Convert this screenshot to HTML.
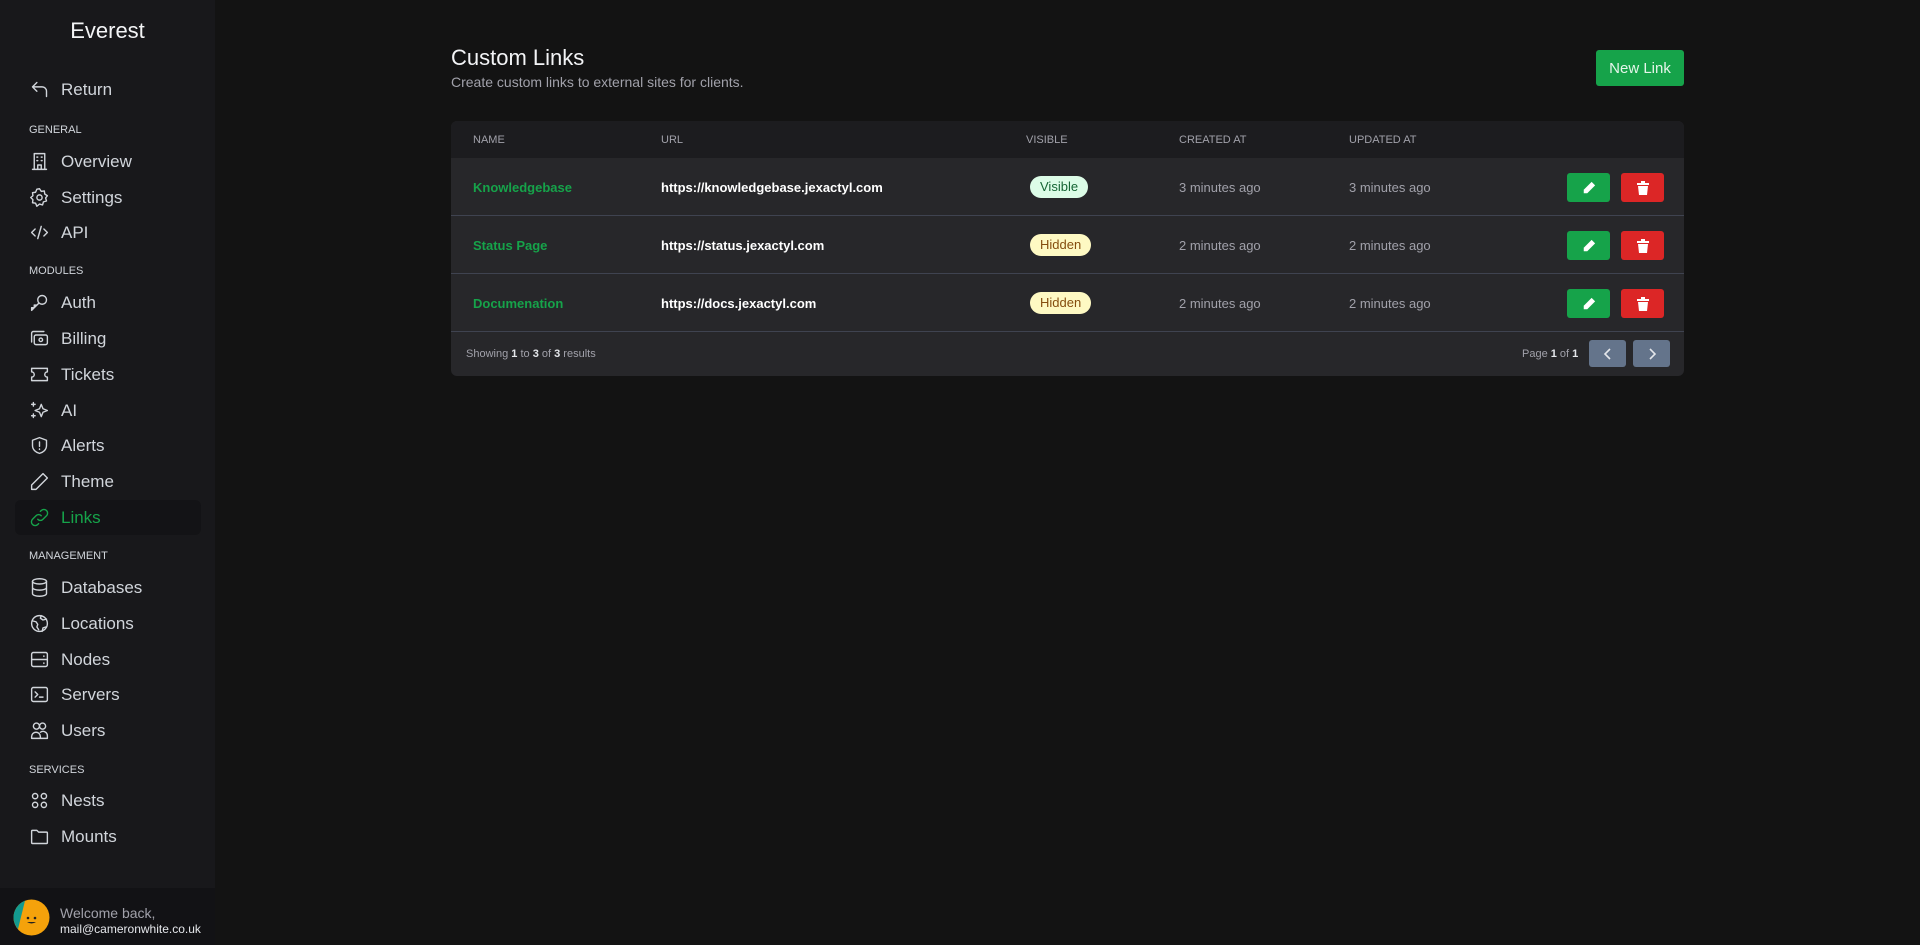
<!DOCTYPE html>
<html><head><meta charset="utf-8"><style>
*{box-sizing:border-box;margin:0;padding:0}
body{width:1920px;height:945px;background:#131313;font-family:"Liberation Sans",sans-serif;color:#e5e7eb;position:relative;overflow:hidden}
#sb{position:absolute;left:0;top:0;width:215px;height:945px;background:#18181b}
.title{position:absolute;top:18px;left:0;width:215px;text-align:center;font-size:22px;color:#f3f4f6}
.sec{position:absolute;left:29px;font-size:11px;color:#d1d5db}
.it{position:absolute;left:15px;width:186px;height:35px;display:flex;align-items:center;font-size:17px;color:#d1d5db;border-radius:6px}
.it svg{position:absolute;left:14px;width:21px;height:21px;fill:none;stroke:#d1d5db;stroke-width:1.6;stroke-linecap:round;stroke-linejoin:round}
.it span{position:absolute;left:46px}
.act{background:#131316;color:#16a34a}
.act svg{stroke:#16a34a}
#ft{position:absolute;left:0;top:888px;width:215px;height:57px;background:#121215}
#main .h1{position:absolute;left:451px;top:45px;font-size:22px;color:#f3f4f6}
#main .sub{position:absolute;left:451px;top:74px;font-size:14px;color:#a1a1aa}
.btn{position:absolute;left:1596px;top:50px;width:88px;height:36px;background:#16a34a;border-radius:3px;color:#e5f5ea;font-size:15px;display:flex;align-items:center;justify-content:center}
#tbl{position:absolute;left:451px;top:121px;width:1233px;height:255px;background:#27272a;border-radius:6px;overflow:hidden}
.th{position:absolute;top:0;left:0;width:100%;height:37px;background:#1c1c1f}
.th div{position:absolute;top:13px;font-size:11px;color:#a1a1aa}
.row{position:absolute;left:0;width:100%;height:58px;border-bottom:1px solid #3f4350}
.row div{position:absolute;top:22px;font-size:13px}
.nm{left:22px;color:#16a34a;font-weight:bold}
.url{left:210px;color:#fff;font-weight:bold}
.tm{color:#a1a1aa}
.badge{top:18px!important;left:579px;height:22px;padding:0 10px;border-radius:11px;font-size:13px!important;line-height:22px}
.ed,.dl{top:15px!important;width:43px;height:29px;border-radius:3px;display:flex;align-items:center;justify-content:center}
.ed{left:1116px;background:#16a34a}.dl{left:1170px;background:#dc2626}
.pg{position:absolute;top:219px;width:37px;height:27px;background:#64748b;border-radius:3px;display:flex;align-items:center;justify-content:center}
</style></head><body>
<div id="sb">
<div class="title">Everest</div>
<div class="it" style="top:72px"><svg viewBox="0 0 24 24"><path d="M9 14L4 9l5-5M4 9h11a5 5 0 015 5v6"/></svg><span>Return</span></div>
<div class="sec" style="top:124px">GENERAL</div>
<div class="it" style="top:144px"><svg viewBox="0 0 24 24"><path d="M4 21h16M6 21V3h12v18M9 7h1M14 7h1M9 11h1M14 11h1M10 21v-5h4v5"/></svg><span>Overview</span></div>
<div class="it" style="top:180px"><svg viewBox="0 0 24 24"><circle cx="12" cy="12" r="3"/><path d="M12 2l2 3 3.5-.5.5 3.5 3 2-2 2.5 1 3.5-3.5 1-1 3.5-3.5-1L9 22l-1.5-3.5-3.5-.5.5-3.5L2 12l2.5-2L4 6.5 7.5 6 9 2.5z"/></svg><span>Settings</span></div>
<div class="it" style="top:215px"><svg viewBox="0 0 24 24"><path d="M7 8l-4 4 4 4M17 8l4 4-4 4M14 5l-4 14"/></svg><span>API</span></div>
<div class="sec" style="top:265px">MODULES</div>
<div class="it" style="top:285px"><svg viewBox="0 0 24 24"><circle cx="15" cy="9" r="5"/><path d="M11 13l-8 8v-3h3v-3h3l2-2"/></svg><span>Auth</span></div>
<div class="it" style="top:321px"><svg viewBox="0 0 24 24"><rect x="6" y="8" width="15" height="11" rx="2"/><path d="M3 16V6a2 2 0 012-2h12"/><circle cx="13.5" cy="13.5" r="2"/></svg><span>Billing</span></div>
<div class="it" style="top:357px"><svg viewBox="0 0 24 24"><path d="M3 5h18v4a3 3 0 000 6v4H3v-4a3 3 0 000-6z"/></svg><span>Tickets</span></div>
<div class="it" style="top:393px"><svg viewBox="0 0 24 24"><path d="M14 5l2 5 5 2-5 2-2 5-2-5-5-2 5-2zM5 3v4M3 5h4M5 16v4M3 18h4"/></svg><span>AI</span></div>
<div class="it" style="top:428px"><svg viewBox="0 0 24 24"><path d="M12 3l8 3v6c0 5-4 8-8 9-4-1-8-4-8-9V6z"/><path d="M12 8v5M12 16v.5"/></svg><span>Alerts</span></div>
<div class="it" style="top:464px"><svg viewBox="0 0 24 24"><path d="M16 3l5 5L8 21H3v-5z"/></svg><span>Theme</span></div>
<div class="it act" style="top:500px"><svg viewBox="0 0 24 24"><path d="M10 14a4 4 0 006 0l4-4a4 4 0 00-6-6l-1 1M14 10a4 4 0 00-6 0l-4 4a4 4 0 006 6l1-1"/></svg><span>Links</span></div>
<div class="sec" style="top:550px">MANAGEMENT</div>
<div class="it" style="top:570px"><svg viewBox="0 0 24 24"><ellipse cx="12" cy="5" rx="8" ry="3"/><path d="M4 5v14c0 1.7 3.6 3 8 3s8-1.3 8-3V5M4 12c0 1.7 3.6 3 8 3s8-1.3 8-3"/></svg><span>Databases</span></div>
<div class="it" style="top:606px"><svg viewBox="0 0 24 24"><circle cx="12" cy="12" r="9"/><path d="M4 9l4 1 2 3-1 3 2 3M14 3l-1 3 3 2 4-1M15 21l1-4 3-1"/></svg><span>Locations</span></div>
<div class="it" style="top:642px"><svg viewBox="0 0 24 24"><rect x="3" y="4" width="18" height="16" rx="2"/><path d="M3 12h18M17 8v.5M17 16v.5"/></svg><span>Nodes</span></div>
<div class="it" style="top:677px"><svg viewBox="0 0 24 24"><rect x="3" y="4" width="18" height="16" rx="2"/><path d="M7 9l3 3-3 3M12 15h4"/></svg><span>Servers</span></div>
<div class="it" style="top:713px"><svg viewBox="0 0 24 24"><circle cx="8.5" cy="7" r="3.5"/><circle cx="15.5" cy="7" r="3.5"/><path d="M3 21v-2a5 5 0 0110 0v2zM13 14a5 5 0 018 4v3h-8"/></svg><span>Users</span></div>
<div class="sec" style="top:764px">SERVICES</div>
<div class="it" style="top:783px"><svg viewBox="0 0 24 24"><circle cx="7" cy="7" r="3"/><circle cx="17" cy="7" r="3"/><circle cx="7" cy="17" r="3"/><circle cx="17" cy="17" r="3"/></svg><span>Nests</span></div>
<div class="it" style="top:819px"><svg viewBox="0 0 24 24"><path d="M3 6a1 1 0 011-1h5l2 2h9a1 1 0 011 1v11a1 1 0 01-1 1H4a1 1 0 01-1-1z"/></svg><span>Mounts</span></div>
<div id="ft">
<svg style="position:absolute;left:13px;top:11px" width="37" height="37" viewBox="0 0 37 37"><circle cx="18.5" cy="18.5" r="18" fill="#f5a20b"/><path d="M0.5 18.5A18 18 0 0 1 12 1.7L5 30A18 18 0 0 1 .5 18.5z" fill="#139a8f"/><circle cx="15" cy="19" r="1.3" fill="#222"/><circle cx="22" cy="19" r="1.3" fill="#222"/><path d="M14 23q4.5 3 9 0z" fill="#222"/></svg>
<div style="position:absolute;left:60px;top:17px;font-size:14px;color:#a1a1aa">Welcome back,</div>
<div style="position:absolute;left:60px;top:34px;font-size:12px;color:#e5e7eb">mail@cameronwhite.co.uk</div>
</div>
</div>
<div id="main">
<div class="h1">Custom Links</div>
<div class="sub">Create custom links to external sites for clients.</div>
<div class="btn">New Link</div>
<div id="tbl">
<div class="th"><div style="left:22px">NAME</div><div style="left:210px">URL</div><div style="left:575px">VISIBLE</div><div style="left:728px">CREATED AT</div><div style="left:898px">UPDATED AT</div></div>
<div class="row" style="top:37px"><div class="nm">Knowledgebase</div><div class="url">https://knowledgebase.jexactyl.com</div><div class="badge" style="background:#dcfce7;color:#166534">Visible</div><div class="tm" style="left:728px">3 minutes ago</div><div class="tm" style="left:898px">3 minutes ago</div><div class="ed"><svg width="14" height="14" viewBox="0 0 16 16"><path d="M11 1l4 4-9 9H2v-4z" fill="#fff"/></svg></div><div class="dl"><svg width="12" height="14" viewBox="0 0 12 14"><path d="M0 2h12v2H0zM4 0h4v2H4zM1 5h10l-1 9H2z" fill="#fff"/></svg></div></div>
<div class="row" style="top:95px"><div class="nm">Status Page</div><div class="url">https://status.jexactyl.com</div><div class="badge" style="background:#fef9c3;color:#854d0e">Hidden</div><div class="tm" style="left:728px">2 minutes ago</div><div class="tm" style="left:898px">2 minutes ago</div><div class="ed"><svg width="14" height="14" viewBox="0 0 16 16"><path d="M11 1l4 4-9 9H2v-4z" fill="#fff"/></svg></div><div class="dl"><svg width="12" height="14" viewBox="0 0 12 14"><path d="M0 2h12v2H0zM4 0h4v2H4zM1 5h10l-1 9H2z" fill="#fff"/></svg></div></div>
<div class="row" style="top:153px"><div class="nm">Documenation</div><div class="url">https://docs.jexactyl.com</div><div class="badge" style="background:#fef9c3;color:#854d0e">Hidden</div><div class="tm" style="left:728px">2 minutes ago</div><div class="tm" style="left:898px">2 minutes ago</div><div class="ed"><svg width="14" height="14" viewBox="0 0 16 16"><path d="M11 1l4 4-9 9H2v-4z" fill="#fff"/></svg></div><div class="dl"><svg width="12" height="14" viewBox="0 0 12 14"><path d="M0 2h12v2H0zM4 0h4v2H4zM1 5h10l-1 9H2z" fill="#fff"/></svg></div></div>
<div style="position:absolute;left:15px;top:227px;font-size:11px;color:#a1a1aa">Showing <b style="color:#e5e7eb">1</b> to <b style="color:#e5e7eb">3</b> of <b style="color:#e5e7eb">3</b> results</div>
<div style="position:absolute;left:1071px;top:227px;font-size:11px;color:#a1a1aa">Page <b style="color:#e5e7eb">1</b> of <b style="color:#e5e7eb">1</b></div>
<div class="pg" style="left:1138px"><svg width="12" height="12" viewBox="0 0 12 12"><path d="M8 1L3 6l5 5" stroke="#e5e7eb" stroke-width="1.6" fill="none"/></svg></div>
<div class="pg" style="left:1182px"><svg width="12" height="12" viewBox="0 0 12 12"><path d="M4 1l5 5-5 5" stroke="#e5e7eb" stroke-width="1.6" fill="none"/></svg></div>
</div>
</div>
</body></html>
